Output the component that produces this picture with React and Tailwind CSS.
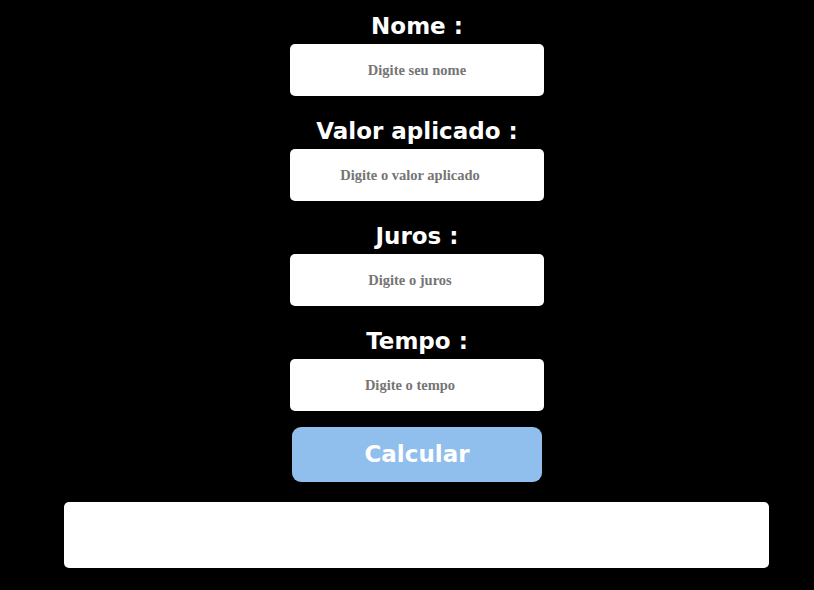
import React from "react";

const fields = [
  { label: "Nome :", ph: "Digite seu nome", pad: "px-0" },
  { label: "Valor aplicado :", ph: "Digite o valor aplicado", pad: "pr-[14px]" },
  { label: "Juros :", ph: "Digite o juros", pad: "pr-[14px]" },
  { label: "Tempo :", ph: "Digite o tempo", pad: "pr-[14px]" },
];

export default function App() {
  return (
    <div className="min-h-[590px] w-full bg-black flex flex-col items-center pl-[20px] pt-[12px] font-['DejaVu_Sans',sans-serif]">
      {fields.map((f, i) => (
        <div key={i} className={`flex flex-col items-center ${i > 0 ? "mt-[21px]" : ""}`}>
          <label className="text-white font-bold text-[23px] leading-[28px] mb-[4px]">{f.label}</label>
          <input
            type="text"
            placeholder={f.ph}
            className={`w-[254px] h-[52px] bg-white rounded-[5px] text-center outline-none font-['Liberation_Serif',serif] font-bold text-[14.5px] placeholder:text-[#757575] ${f.pad}`}
          />
        </div>
      ))}
      <button className="mt-[16px] w-[250px] h-[55px] rounded-[9px] bg-[#90BEED] text-white font-bold text-[23px]">
        Calcular
      </button>
      <div className="mt-[20px] mr-[2px] w-[705px] h-[66px] bg-white rounded-[5px]"></div>
    </div>
  );
}
